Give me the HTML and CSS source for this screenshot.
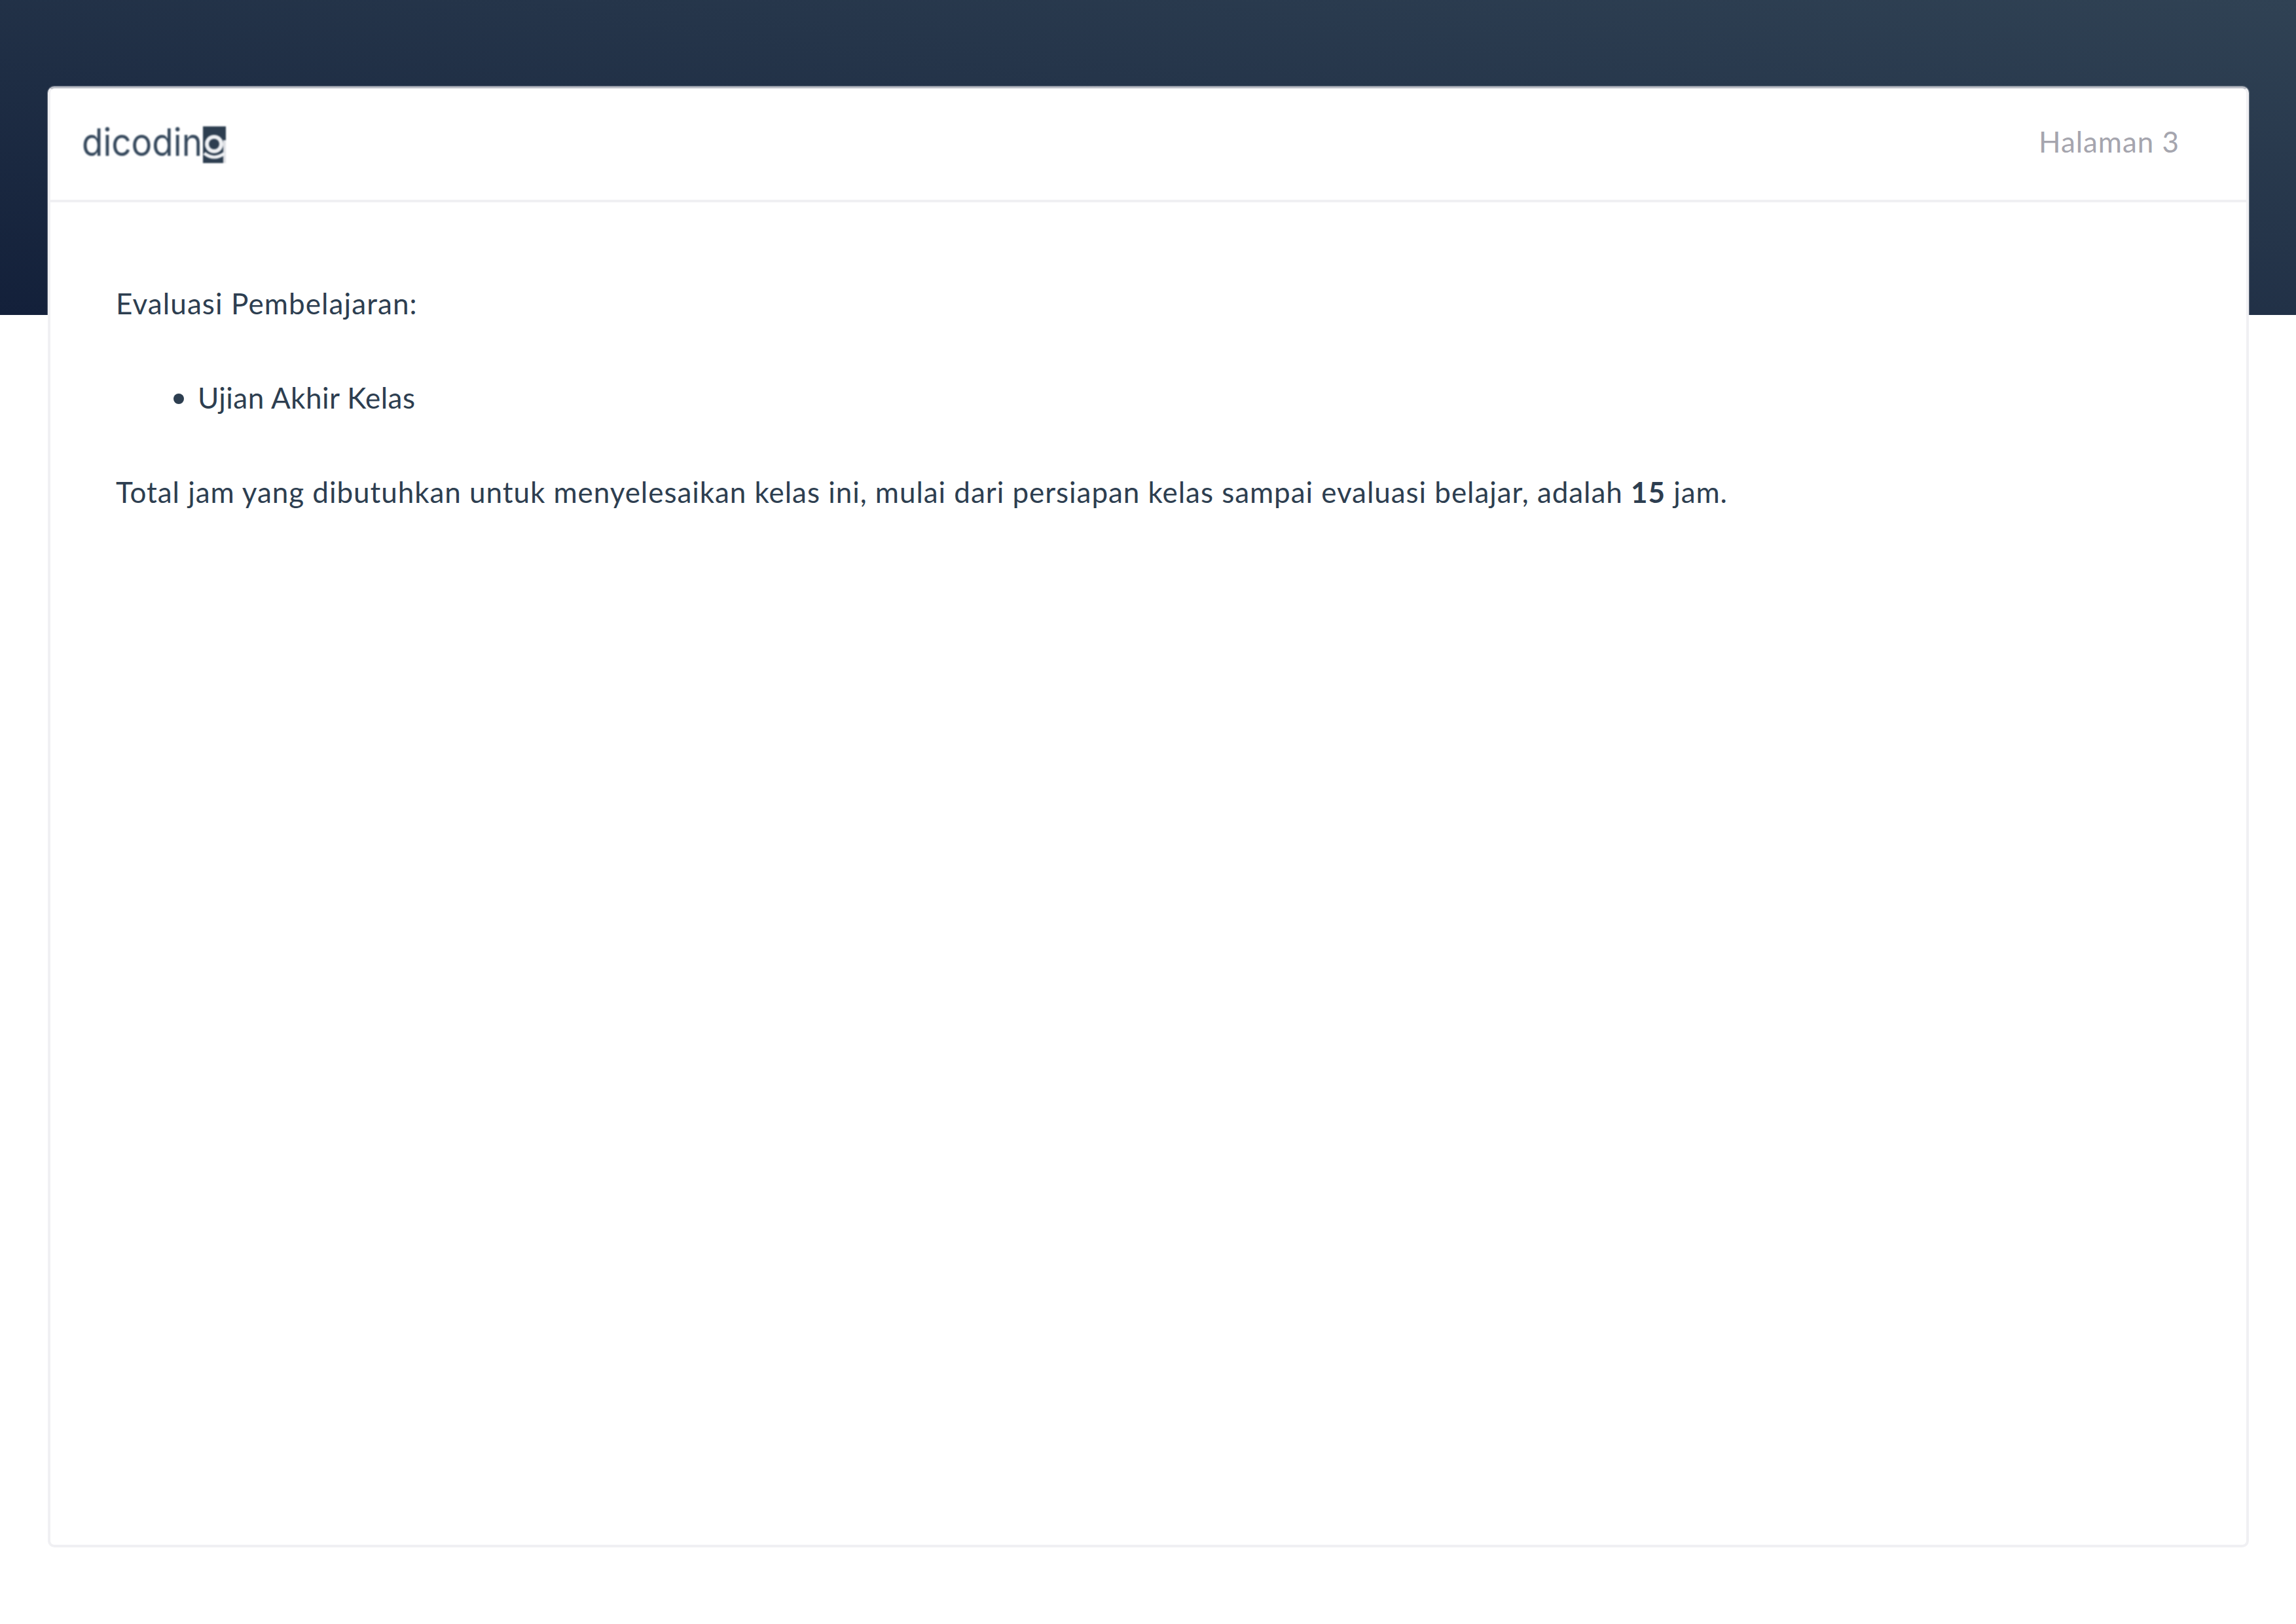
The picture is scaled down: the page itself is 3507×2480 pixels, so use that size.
FILE: index.html
```html
<!DOCTYPE html>
<html lang="id">
<head>
<meta charset="utf-8">
<title>Dicoding - Halaman 3</title>
<link rel="stylesheet" href="styles.css">
</head>
<body>
<div class="band"></div>
<main class="card">
  <header class="card-header">
    <svg class="logo" viewBox="0 0 222 60" width="222" height="60" aria-label="dicoding">
      <text class="logo-text" x="0" y="46" textLength="184" lengthAdjust="spacingAndGlyphs">dicodin</text>
      <path class="logo-box" d="M185 1h35v56h-35z"/>
      <path class="logo-side" d="M216 22h4v35h-4z"/>
      <circle class="logo-ring" cx="202" cy="28" r="14"/>
      <circle class="logo-dot" cx="202" cy="28" r="8"/>
      <path class="logo-tail" d="M187 42q15 12 31 0"/>
    </svg>
    <span class="page-label">Halaman 3</span>
  </header>
  <section class="card-body">
    <p class="lead">Evaluasi Pembelajaran:</p>
    <ul>
      <li>Ujian Akhir Kelas</li>
    </ul>
    <p>Total jam yang dibutuhkan untuk menyelesaikan kelas ini, mulai dari persiapan kelas sampai evaluasi belajar, adalah <strong>15</strong> jam.</p>
  </section>
</main>
</body>
</html>
```
FILE: styles.css
```css
html, body {
  margin: 0;
  padding: 0;
  background: #ffffff;
}
body {
  width: 3507px;
  height: 2480px;
  overflow: hidden;
  font-family: "Lato", "Open Sans", sans-serif;
  color: #2d3e50;
}
.band {
  height: 481px;
  background: linear-gradient(to top right, #13203a, #304254);
}
.card {
  box-sizing: border-box;
  width: 3362px;
  height: 2231px;
  margin: -349px 0 0 73px;
  background: #ffffff;
  border-style: solid;
  border-width: 3px 4px 4px;
  border-color: #bcbec6 #f0f0f3 #f0f0f3;
  border-radius: 10px;
  box-shadow: 0 0 1px 1px rgba(255, 255, 255, 0.3);
}
.card-header {
  box-sizing: border-box;
  height: 174px;
  display: flex;
  align-items: center;
  justify-content: space-between;
  padding: 0 102px 0 48px;
  border-bottom: 4px solid #f0f0f3;
}
.logo {
  display: block;
  overflow: visible;
  margin-top: 4px;
  filter: blur(0.8px);
}
.logo-text {
  font-family: "Inter", sans-serif;
  font-size: 58px;
  fill: #34475b;
}
.logo-box { fill: #2d3e50; }
.logo-ring { fill: #eef0f3; }
.logo-dot { fill: #2d3e50; }
.logo-tail { fill: none; stroke: #eef0f3; stroke-width: 5px; }
.logo-side { fill: #dfe1e5; }
.page-label {
  margin-bottom: 8px;
  font-size: 44px;
  letter-spacing: 0.95px;
  color: #a5a5ae;
}
.card-body {
  padding: 122px 100px 0;
  font-size: 44px;
  line-height: 64px;
  letter-spacing: 0.95px;
}
.card-body p, .card-body ul {
  margin: 0 0 80px;
}
.card-body .lead {
  letter-spacing: 1.1px;
}
.card-body ul {
  padding-left: 88px;
  list-style: none;
}
.card-body li {
  display: flex;
  align-items: center;
  gap: 21px;
  letter-spacing: 0.45px;
}
.card-body li::before {
  content: "";
  width: 16px;
  height: 16px;
  border-radius: 50%;
  background: #2d3e50;
  margin-top: 4px;
}
```
